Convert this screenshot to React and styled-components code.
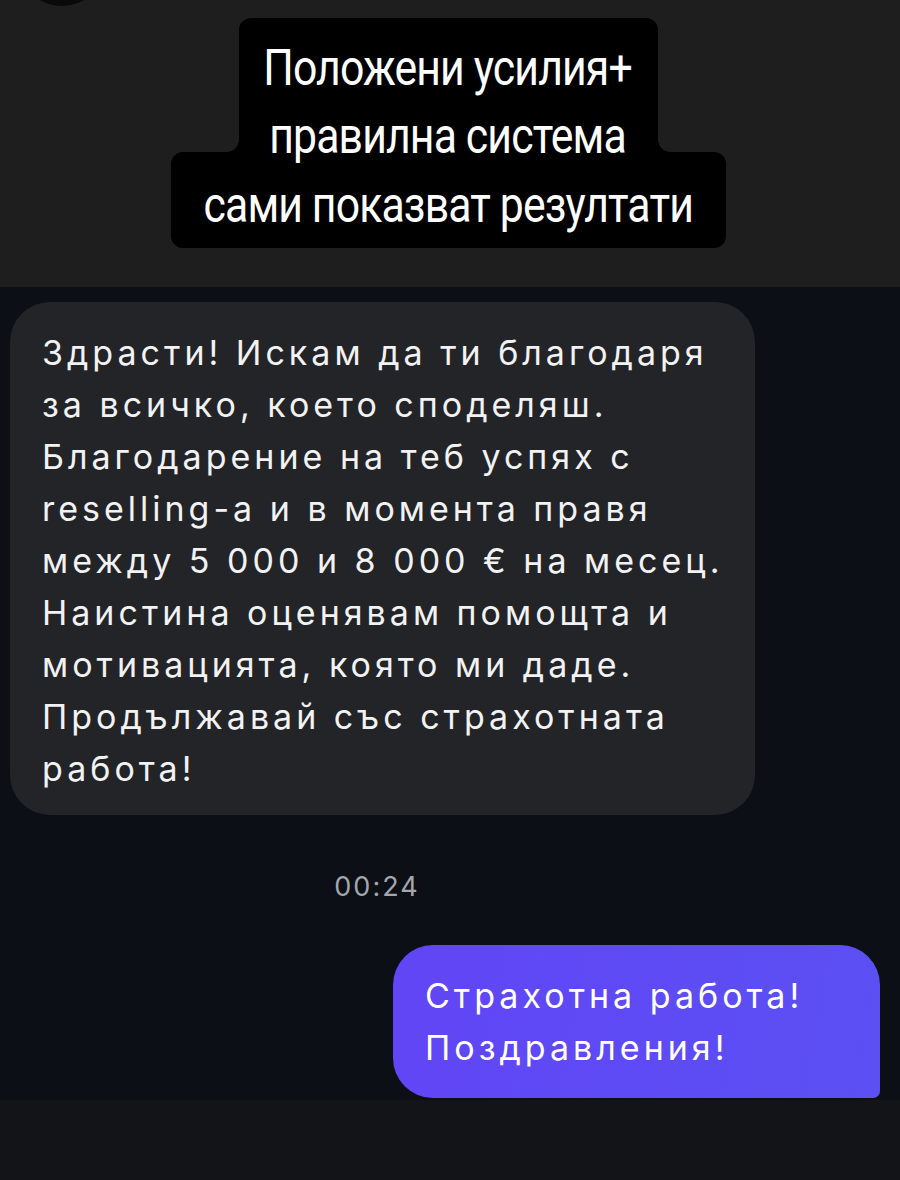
import React from 'react';
import styled, { createGlobalStyle } from 'styled-components';

const GlobalStyle = createGlobalStyle`
  html, body {
    margin: 0;
    padding: 0;
    background: #131417;
  }
`;

const incoming = [
  'Здрасти! Искам да ти благодаря',
  'за всичко, което споделяш.',
  'Благодарение на теб успях с',
  'reselling-а и в момента правя',
  'между 5 000 и 8 000 € на месец.',
  'Наистина оценявам помощта и',
  'мотивацията, която ми даде.',
  'Продължавай със страхотната',
  'работа!',
];

const outgoing = ['Страхотна работа!', 'Поздравления!'];

// each caption row: its box width, height, top padding and corner radius
const caption = [
  { text: 'Положени усилия+', width: 419, height: 68, pad: 16, radius: '12px 12px 0 0' },
  { text: 'правилна система', width: 419, height: 66, pad: 16, radius: '0', joint: true },
  { text: 'сами показват резултати', width: 555, height: 96, pad: 19, radius: '12px' },
];

const App = () => {
  return (
    <>
      <GlobalStyle />
      <Page lang='bg'>
        <Story>
          <Avatar />
          <Caption>
            {caption.map((row) => (
              <CaptionRow
                key={row.text}
                $width={row.width}
                $height={row.height}
                $pad={row.pad}
                $radius={row.radius}
                $joint={row.joint}
              >
                <CaptionText>{row.text}</CaptionText>
              </CaptionRow>
            ))}
          </Caption>
        </Story>
        <Chat>
          <Bubble>
            {incoming.map((line, i) => (
              <Line key={i}>{line}</Line>
            ))}
          </Bubble>
          <Time>00:24</Time>
          <Bubble $mine>
            {outgoing.map((line, i) => (
              <Line key={i}>{line}</Line>
            ))}
          </Bubble>
        </Chat>
        <Footer />
      </Page>
    </>
  );
};

const Page = styled.div`
  display: flex;
  flex-direction: column;
  width: 900px;
  min-height: 1180px;
  background: #131417;
`;

const Story = styled.div`
  position: relative;
  height: 287px;
  background: #1e1e1e;
  overflow: hidden;
`;

const Avatar = styled.div`
  position: absolute;
  top: -84px;
  left: 17px;
  width: 90px;
  height: 90px;
  border-radius: 50%;
  background: #0a0a0a;
`;

const Caption = styled.div`
  display: flex;
  flex-direction: column;
  align-items: center;
  padding-top: 18px;
  padding-right: 4px;
  font-family: Roboto, "Liberation Sans", sans-serif;
  font-size: 50px;
  font-weight: 400;
  line-height: 68px;
  letter-spacing: -1px;
  color: #ffffff;
`;

const CaptionRow = styled.div`
  position: relative;
  box-sizing: border-box;
  display: flex;
  justify-content: center;
  align-items: flex-start;
  width: ${(p) => p.$width}px;
  height: ${(p) => p.$height}px;
  padding-top: ${(p) => p.$pad}px;
  border-radius: ${(p) => p.$radius};
  background: #000000;
  white-space: nowrap;

  ${(p) =>
    p.$joint &&
    `
    &::before, &::after {
      content: '';
      position: absolute;
      bottom: 0;
      width: 12px;
      height: 12px;
    }
    &::before {
      left: -12px;
      background: radial-gradient(circle at 0 0, transparent 11.5px, #000 12px);
    }
    &::after {
      right: -12px;
      background: radial-gradient(circle at 100% 0, transparent 11.5px, #000 12px);
    }
  `}
`;

const CaptionText = styled.span`
  position: relative;
  z-index: 1;
  display: inline-block;
  flex-shrink: 0;
  transform: scaleX(0.855);
  transform-origin: center;
`;

const Chat = styled.div`
  display: flex;
  flex-direction: column;
  background: #0c0f16;
  padding: 15px 20px 2px 10px;
`;

const Bubble = styled.div`
  align-self: ${(p) => (p.$mine ? 'flex-end' : 'flex-start')};
  box-sizing: border-box;
  width: ${(p) => (p.$mine ? '487px' : '745px')};
  padding: ${(p) => (p.$mine ? '25px 20px 24px 32px' : '25px 20px 20px 32px')};
  border-radius: ${(p) => (p.$mine ? '40px 40px 7px 40px' : '40px')};
  background: ${(p) =>
    p.$mine ? 'linear-gradient(100deg, #6145f6 0%, #5b50f3 100%)' : '#232428'};
  color: ${(p) => (p.$mine ? '#ffffff' : '#f2f2f3')};
  font-family: Inter, "Liberation Sans", sans-serif;
  font-size: 34px;
  line-height: 52px;
  letter-spacing: 4px;
`;

const Line = styled.div`
  white-space: nowrap;
`;

const Time = styled.div`
  margin: 57px 0 43px;
  padding-right: 136px;
  text-align: center;
  font-family: Inter, "Liberation Sans", sans-serif;
  font-size: 27px;
  line-height: 30px;
  letter-spacing: 2px;
  color: #a3a6ac;
`;

const Footer = styled.div`
  height: 80px;
  background: #131417;
`;

export default App;
